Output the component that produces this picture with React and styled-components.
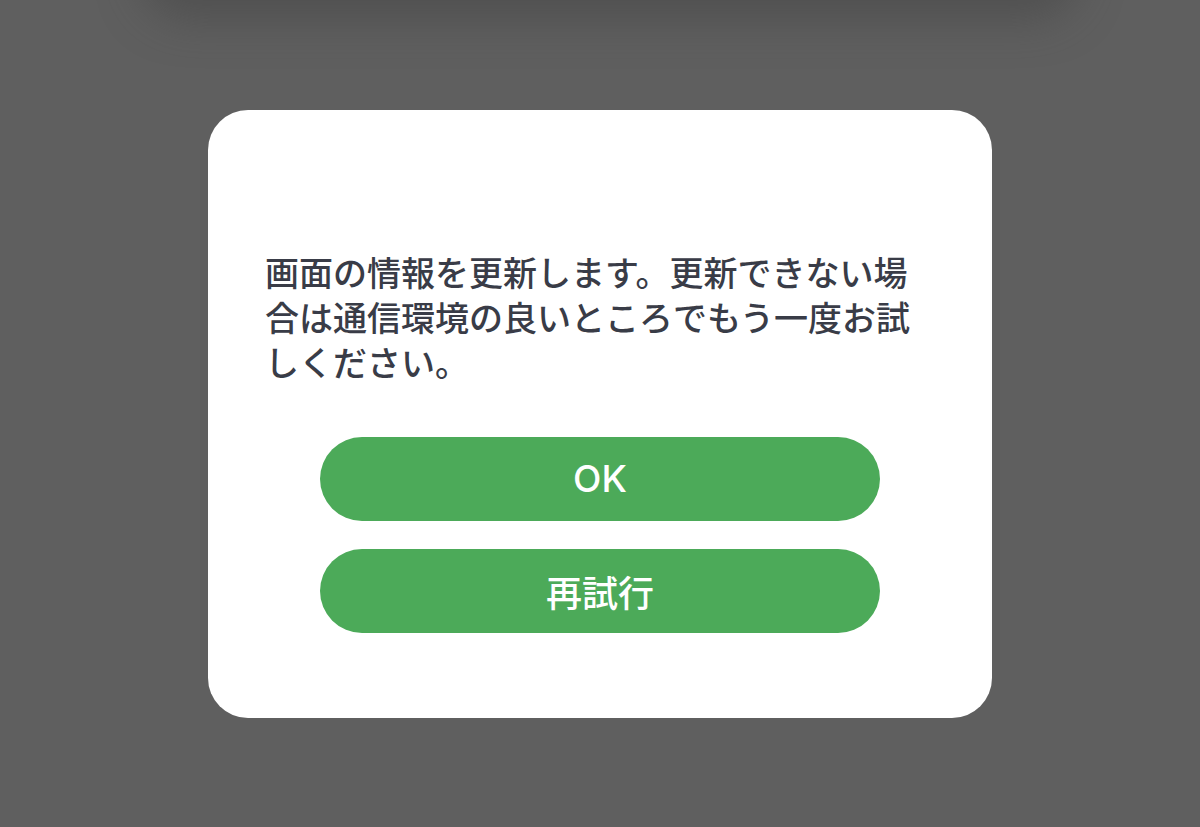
import React from "react";
import styled, { createGlobalStyle } from "styled-components";

const Global = createGlobalStyle`
  html, body { margin: 0; padding: 0; }
  body {
    background: #5f5f5f;
    font-family: "Noto Sans CJK JP", "Noto Sans", sans-serif;
  }
`;

const Screen = styled.div`
  position: relative;
  width: 1200px;
  height: 827px;
  overflow: hidden;
  background: #5f5f5f;
  display: flex;
  align-items: center;
  justify-content: center;
`;

const BehindCard = styled.div`
  position: absolute;
  left: 160px;
  right: 140px;
  top: -60px;
  height: 60px;
  border-radius: 30px;
  background: #555;
  box-shadow: 0 0 40px 20px rgba(70, 70, 70, 0.55);
`;

const Dialog = styled.div`
  position: relative;
  width: 784px;
  height: 608px;
  box-sizing: border-box;
  background: #ffffff;
  border-radius: 40px;
  padding: 139px 57px 0 57px;
  display: flex;
  flex-direction: column;
  align-items: center;
`;

const Message = styled.p`
  margin: 0;
  width: 670px;
  font-size: 34px;
  line-height: 45px;
  font-weight: 500;
  color: #393c47;
  letter-spacing: 0;
`;

const Actions = styled.div`
  margin-top: 53px;
  display: flex;
  flex-direction: column;
  gap: 28px;
`;

const Button = styled.button`
  width: 560px;
  height: 84px;
  border: none;
  border-radius: 42px;
  background: #4caa59;
  color: #ffffff;
  font-family: ${(p) =>
    p.$latin
      ? `"Inter", "Noto Sans", sans-serif`
      : `"Noto Sans CJK JP", "Noto Sans", sans-serif`};
  font-size: ${(p) => (p.$latin ? "37px" : "36px")};
  font-weight: 500;
  display: flex;
  align-items: center;
  justify-content: center;
  padding: 0;
  cursor: pointer;
`;

export default function App() {
  return (
    <>
      <Global />
      <Screen>
        <BehindCard />
        <Dialog>
          <Message>
            画面の情報を更新します。更新できない場合は通信環境の良いところでもう一度お試しください。
          </Message>
          <Actions>
            <Button $latin>OK</Button>
            <Button>再試行</Button>
          </Actions>
        </Dialog>
      </Screen>
    </>
  );
}
